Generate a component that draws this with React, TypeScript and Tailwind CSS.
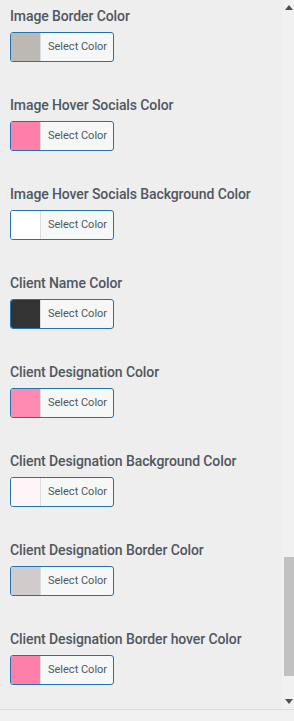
import React from 'react';

// ─── Data ─────────────────────────────────────────────────────────────────────

interface ColorField {
  label: string;
  swatch: string;
}

const fields: ColorField[] = [
  { label: 'Image Border Color', swatch: 'bg-[#bcb9b2]' },
  { label: 'Image Hover Socials Color', swatch: 'bg-[#ff7fab]' },
  { label: 'Image Hover Socials Background Color', swatch: 'bg-[#ffffff]' },
  { label: 'Client Name Color', swatch: 'bg-[#333333]' },
  { label: 'Client Designation Color', swatch: 'bg-[#ff8ab1]' },
  { label: 'Client Designation Background Color', swatch: 'bg-[#fff5f8]' },
  { label: 'Client Designation Border Color', swatch: 'bg-[#d2cbcb]' },
  { label: 'Client Designation Border hover Color', swatch: 'bg-[#ff7fab]' },
];

// ─── ColorPicker ──────────────────────────────────────────────────────────────

function ColorPicker({ label, swatch }: ColorField) {
  return (
    <div className="flex h-[89px] shrink-0 flex-col items-start pt-[6px]">
      <label className="text-[14px] leading-[20px] font-medium tracking-[-0.1px] text-[#50575e] whitespace-nowrap">
        {label}
      </label>
      <button
        type="button"
        className="mt-[6px] flex h-[30px] w-[104px] overflow-hidden rounded-[3px] border border-[#2271b1] bg-[#f6f7f7]"
      >
        <span className={`h-full w-[30px] border-r border-[#dcdcde] ${swatch}`} />
        <span className="flex h-full flex-1 items-center pl-[7px] text-[11px] text-[#50575e]">
          Select Color
        </span>
      </button>
    </div>
  );
}

// ─── App ──────────────────────────────────────────────────────────────────────

export default function App() {
  return (
    <div className="flex h-[721px] w-[294px] flex-col overflow-hidden bg-[#eeeeee] font-['Roboto',sans-serif]">
      <div className="flex h-[709px] shrink-0">
        <div className="flex flex-1 flex-col overflow-hidden pl-[10px]">
          {fields.map((f) => (
            <ColorPicker key={f.label} {...f} />
          ))}
        </div>

        {/* scrollbar */}
        <div className="flex w-[12px] flex-col items-end bg-[#f1f1f1]">
          <div className="flex h-[14px] w-[10px] items-center justify-center">
            <svg width="8" height="5" viewBox="0 0 8 5">
              <path d="M0 5 L4 0 L8 5 Z" fill="#505050" />
            </svg>
          </div>
          <div className="mt-[543px] h-[119px] w-[10px] bg-[#c1c1c1]" />
          <div className="flex flex-1 w-[10px] items-end justify-center pb-[5px]">
            <svg width="8" height="5" viewBox="0 0 8 5">
              <path d="M0 0 L8 0 L4 5 Z" fill="#505050" />
            </svg>
          </div>
        </div>
      </div>
      <div className="flex-1 border-t border-[#dddddd] bg-[#f0f0f0]" />
    </div>
  );
}
